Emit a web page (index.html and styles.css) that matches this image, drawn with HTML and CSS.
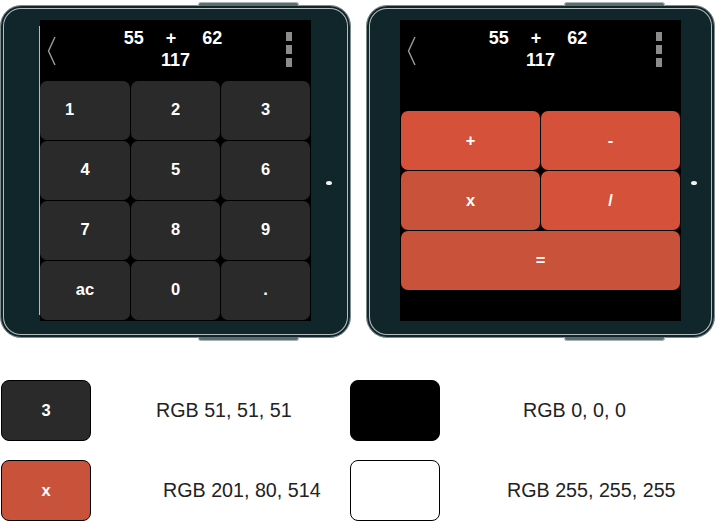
FILE: index.html
```html
<!DOCTYPE html>
<html lang="en">
<head>
<meta charset="utf-8">
<title>Calculator UI</title>
<link rel="stylesheet" href="styles.css">
</head>
<body>
<div class="page">
  <div class="devices">
    <div class="device device--left">
      <span class="bump bump--top"></span>
      <span class="bump bump--bottom"></span>
      <span class="dot"></span>
      <div class="screen screen--left">
        <span class="edge"></span>
        <header class="bar bar--left">
          <svg class="back" width="9" height="30" viewBox="0 0 9 30"><polyline points="8,1 1.5,15 8,29" fill="none" stroke="#9c9c9c" stroke-width="1.4"/></svg>
          <div class="readout">
            <div class="expr"><span>55</span><span class="op">+</span><span>62</span></div>
            <div class="result">117</div>
          </div>
          <div class="menu"><i></i><i></i><i></i></div>
        </header>
        <div class="keypad">
          <div class="key key--one">1</div>
          <div class="key">2</div>
          <div class="key">3</div>
          <div class="key">4</div>
          <div class="key">5</div>
          <div class="key">6</div>
          <div class="key">7</div>
          <div class="key">8</div>
          <div class="key">9</div>
          <div class="key">ac</div>
          <div class="key">0</div>
          <div class="key">.</div>
        </div>
      </div>
    </div>
    <div class="device device--right">
      <span class="bump bump--top"></span>
      <span class="bump bump--bottom"></span>
      <span class="dot"></span>
      <div class="screen screen--right">
        <header class="bar bar--right">
          <svg class="back" width="9" height="30" viewBox="0 0 9 30"><polyline points="8,1 1.5,15 8,29" fill="none" stroke="#9c9c9c" stroke-width="1.4"/></svg>
          <div class="readout">
            <div class="expr"><span>55</span><span class="op">+</span><span>62</span></div>
            <div class="result">117</div>
          </div>
          <div class="menu"><i></i><i></i><i></i></div>
        </header>
        <div class="ops">
          <div class="opkey">+</div>
          <div class="opkey">-</div>
          <div class="opkey opkey--dark">x</div>
          <div class="opkey">/</div>
          <div class="opkey opkey--dark opkey--wide">=</div>
        </div>
      </div>
    </div>
  </div>

  <div class="legend">
    <div class="legend-row">
      <div class="cell cell--first">
        <div class="swatch swatch--gray">3</div>
        <span class="label label--a">RGB 51, 51, 51</span>
      </div>
      <div class="cell">
        <div class="swatch swatch--black"></div>
        <span class="label label--c">RGB 0, 0, 0</span>
      </div>
    </div>
    <div class="legend-row">
      <div class="cell cell--first">
        <div class="swatch swatch--orange">x</div>
        <span class="label label--b">RGB 201, 80, 514</span>
      </div>
      <div class="cell">
        <div class="swatch swatch--white"></div>
        <span class="label label--d">RGB 255, 255, 255</span>
      </div>
    </div>
  </div>
</div>
</body>
</html>
```

FILE: styles.css
```css
* { box-sizing: border-box; }

html, body {
  margin: 0;
  padding: 0;
  background: #ffffff;
  font-family: "Liberation Sans", Arial, sans-serif;
}

.page {
  width: 716px;
  height: 521px;
  padding-top: 5px;
  overflow: hidden;
}

.devices {
  display: flex;
  gap: 15px;
  height: 333px;
}

.device {
  position: relative;
  height: 333px;
  background: #11262a;
  border: 1px solid #7f8d8f;
  border-radius: 21px;
  box-shadow: inset 0 0 0 2px #11262a, inset 0 0 0 3px #b3bdbd;
  padding-top: 14px;
}

.device--left {
  width: 351px;
  padding-left: 39px;
}

.device--right {
  width: 349px;
  padding-left: 33px;
}

.bump {
  position: absolute;
  left: 197px;
  width: 101px;
  height: 4px;
  background: #5d6c6e;
  border: 1px solid #a9b3b3;
}

.bump--top {
  top: -4px;
  border-bottom: none;
  border-radius: 3px 3px 0 0;
}

.bump--bottom {
  bottom: -4px;
  border-top: none;
  border-radius: 0 0 3px 3px;
}

.dot {
  position: absolute;
  right: 18px;
  top: 175px;
  width: 6px;
  height: 4px;
  border-radius: 50%;
  background: #f2f2f2;
}

.device--right .dot { right: 17px; }

.screen {
  position: relative;
  height: 301px;
  background: #000000;
}

.screen--left { width: 271px; }
.screen--right { width: 281px; }

.edge {
  position: absolute;
  left: -1px;
  top: 6px;
  bottom: 6px;
  width: 1px;
  background: #b8b8b8;
}

.bar {
  display: grid;
  grid-template-columns: 48px 1fr 48px;
  align-items: start;
  color: #ffffff;
}

.bar--left { height: 61px; }
.bar--right { height: 91px; }

.back {
  display: block;
  margin-left: 7px;
  margin-top: 16px;
}

.readout {
  padding-top: 7px;
  font-weight: bold;
  font-size: 18px;
  line-height: 22px;
  text-align: center;
}

.expr {
  display: flex;
  justify-content: center;
  gap: 22px;
  margin-right: 5px;
}

.expr .op { margin-right: 4px; }

.menu {
  justify-self: end;
  margin-right: 19px;
  margin-top: 12px;
  display: flex;
  flex-direction: column;
  gap: 4px;
}

.menu i {
  display: block;
  width: 6px;
  height: 9px;
  background: #8c8c8c;
}

.keypad {
  display: grid;
  grid-template-columns: 90px 89px 89px;
  grid-auto-rows: 59px;
  gap: 1px;
}

.key {
  display: flex;
  align-items: center;
  justify-content: center;
  padding-bottom: 2px;
  background: #2a2a2a;
  border-radius: 7px;
  color: #ffffff;
  font-weight: bold;
  font-size: 16.5px;
}

.key--one { padding-right: 31px; }

.ops {
  display: grid;
  grid-template-columns: 139px 139px;
  grid-auto-rows: 59px;
  gap: 1px;
  padding-left: 1px;
}

.opkey {
  display: flex;
  align-items: center;
  justify-content: center;
  background: #d5513a;
  border-radius: 7px;
  color: #ffffff;
  font-weight: bold;
  font-size: 16.5px;
}

.opkey--dark { background: #c9523a; }
.opkey--wide { grid-column: span 2; }

.legend {
  margin-top: 42px;
  display: flex;
  flex-direction: column;
  gap: 19px;
}

.legend-row {
  display: flex;
}

.cell {
  display: flex;
  align-items: center;
}

.cell--first {
  width: 350px;
  padding-left: 1px;
}

.swatch {
  width: 90px;
  height: 61px;
  border: 1px solid #000000;
  border-radius: 8px;
  display: flex;
  align-items: center;
  justify-content: center;
  color: #ffffff;
  font-weight: bold;
  font-size: 16.5px;
}

.swatch--gray { background: #2a2a2a; }
.swatch--orange { background: #c9523a; }
.swatch--black { background: #000000; }
.swatch--white { background: #ffffff; }

.label {
  font-size: 19.7px;
  color: #222222;
}

.label--a { margin-left: 65px; }
.label--b { margin-left: 72px; }
.label--c { margin-left: 83px; }
.label--d { margin-left: 67px; }
```
